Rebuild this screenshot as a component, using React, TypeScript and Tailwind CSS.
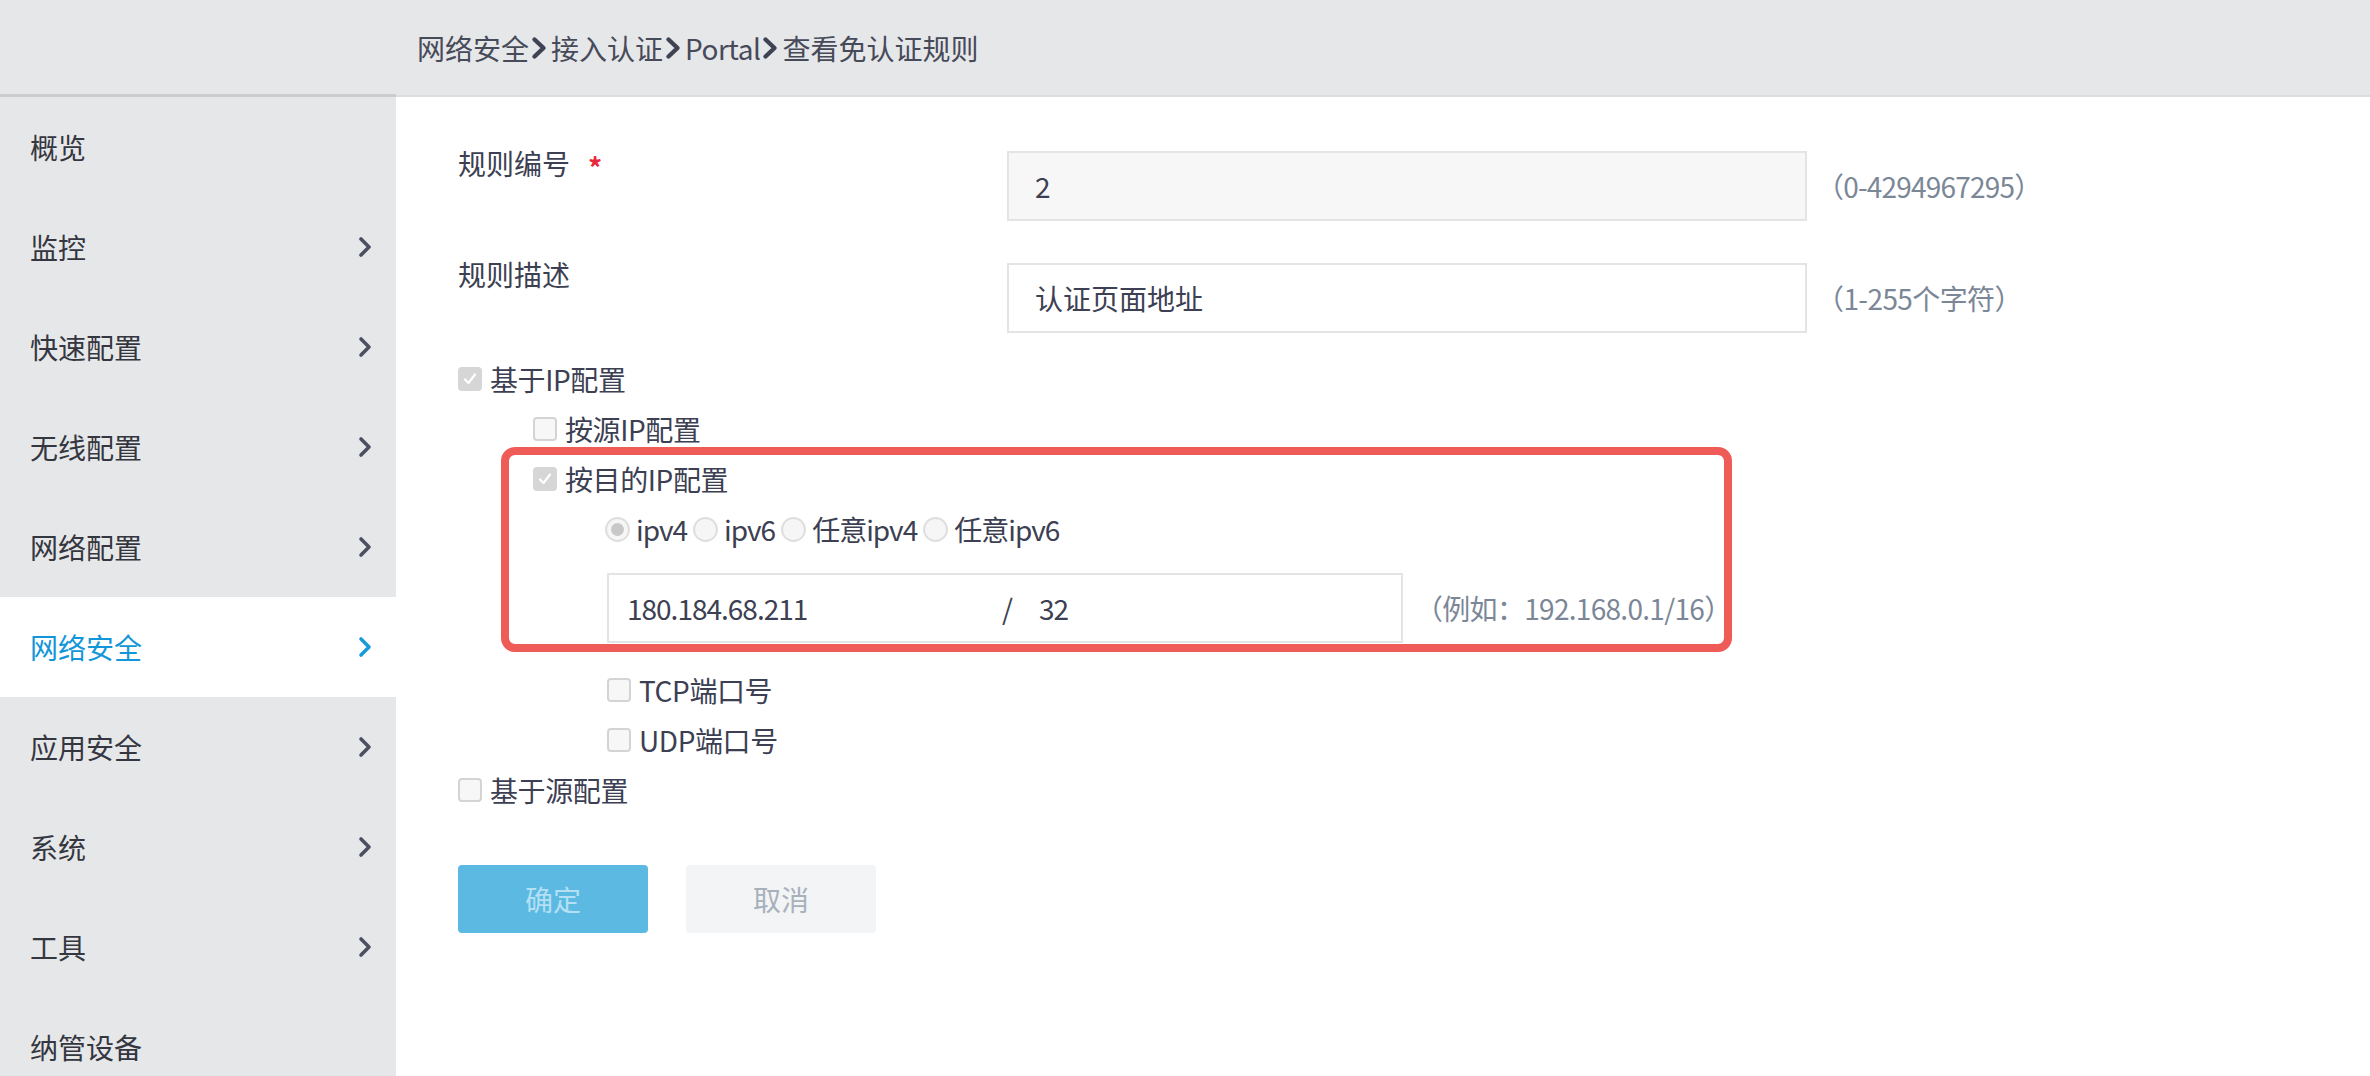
import React from 'react';

const menu = [
    { label: '概览', arrow: false },
    { label: '监控', arrow: true },
    { label: '快速配置', arrow: true },
    { label: '无线配置', arrow: true },
    { label: '网络配置', arrow: true },
    { label: '网络安全', arrow: true, active: true },
    { label: '应用安全', arrow: true },
    { label: '系统', arrow: true },
    { label: '工具', arrow: true },
    { label: '纳管设备', arrow: false },
];

const Chevron = ({ className }: { className?: string }) => (
    <svg width="14" height="22" viewBox="0 0 14 22" className={className}>
        <path d="M3 3 L11 11 L3 19" fill="none" stroke="currentColor" strokeWidth="3.6" strokeLinecap="round" strokeLinejoin="round" />
    </svg>
);

const Crumb = () => (
    <svg width="16" height="24" viewBox="0 0 16 24" className="ml-[2px] mr-[4px] text-[#3f4353]">
        <path d="M3.5 3.5 L12.5 12 L3.5 20.5" fill="none" stroke="currentColor" strokeWidth="4.4" strokeLinecap="round" strokeLinejoin="round" />
    </svg>
);

const Check = ({ checked }: { checked?: boolean }) =>
    checked ? (
        <div className="w-[24px] h-[24px] rounded-[4px] bg-[#d6d6d6] flex items-center justify-center shrink-0">
            <svg width="16" height="16" viewBox="0 0 16 16">
                <path d="M3 8.5 L6.5 12 L13 3.5" fill="none" stroke="#ffffff" strokeWidth="2.2" strokeLinecap="round" strokeLinejoin="round" />
            </svg>
        </div>
    ) : (
        <div className="w-[24px] h-[24px] rounded-[4px] border-2 border-[#d4d4d4] bg-[#f7f7f7] shrink-0" />
    );

const Radio = ({ checked }: { checked?: boolean }) => (
    <div className="w-[25px] h-[25px] rounded-full border-2 border-[#dedede] bg-[#f6f6f6] flex items-center justify-center shrink-0">
        {checked && <div className="w-[13px] h-[13px] rounded-full bg-[#c8c8c8]" />}
    </div>
);

const CheckRow = ({ label, checked, indent }: { label: string; checked?: boolean; indent: string }) => (
    <div className={`h-[50px] flex items-center gap-[8px] ${indent}`}>
        <Check checked={checked} />
        <span className="tracking-[-0.4px]">{label}</span>
    </div>
);

export default function App() {
    return (
        <div className="w-full h-[1076px] flex flex-col bg-white overflow-hidden font-['Noto_Sans_CJK_SC',sans-serif] text-[28px] text-[#3c4052]">
            {/* header */}
            <div className="h-[97px] flex bg-[#e6e7e9] shrink-0">
                <div className="w-[396px] border-b-[3px] border-[#cbcccf]" />
                <div className="flex-1 border-b-2 border-[#dcdde0] flex items-center pl-[21px] text-[#464a59] leading-none">
                    <span>网络安全</span>
                    <Crumb />
                    <span>接入认证</span>
                    <Crumb />
                    <span className="tracking-[-0.5px]">Portal</span>
                    <Crumb />
                    <span>查看免认证规则</span>
                </div>
            </div>

            <div className="flex flex-1 min-h-0">
                {/* sidebar */}
                <div className="w-[396px] bg-[#e6e7e9] shrink-0">
                    {menu.map((m) => (
                        <div
                            key={m.label}
                            className={`h-[100px] flex items-center justify-between pl-[30px] pr-[24px] ${
                                m.active ? 'bg-white text-[#1296d8]' : 'text-[#343640]'
                            }`}
                        >
                            <span>{m.label}</span>
                            {m.arrow && <Chevron className={m.active ? 'text-[#1a9ad8]' : 'text-[#4b4f61]'} />}
                        </div>
                    ))}
                </div>

                {/* form */}
                <div className="flex-1 pl-[62px] pt-[52px]">
                    <div className="flex items-start">
                        <div className="w-[549px] leading-[28px] flex">
                            <span>规则编号</span>
                            <span className="ml-[18px] mt-[4px] text-[#e8263c] font-bold">*</span>
                        </div>
                        <div className="mt-[2px] w-[800px] h-[70px] border-2 border-[#e3e4e6] bg-[#f7f7f7] flex items-center pl-[26px]">
                            2
                        </div>
                        <span className="mt-[2px] h-[70px] flex items-center ml-[9px] text-[#7b8797] tracking-[-0.8px]">（0-4294967295）</span>
                    </div>

                    <div className="flex items-start mt-[39px]">
                        <div className="w-[549px] leading-[28px]">规则描述</div>
                        <div className="mt-[3px] w-[800px] h-[70px] border-2 border-[#e3e4e6] bg-white flex items-center pl-[26px]">
                            认证页面地址
                        </div>
                        <span className="mt-[3px] h-[70px] flex items-center ml-[9px] text-[#7b8797] tracking-[-0.6px]">（1-255个字符）</span>
                    </div>

                    <div className="mt-[21px]">
                        <CheckRow label="基于IP配置" checked indent="" />
                        <CheckRow label="按源IP配置" indent="ml-[75px]" />

                        <div className="relative ml-[75px]">
                            <CheckRow label="按目的IP配置" checked indent="" />
                            <div className="h-[50px] flex items-center ml-[72px] gap-[6px] tracking-[-1px]">
                                <Radio checked />
                                <span>ipv4</span>
                                <Radio />
                                <span>ipv6</span>
                                <Radio />
                                <span>任意ipv4</span>
                                <Radio />
                                <span>任意ipv6</span>
                            </div>
                            <div className="flex items-center ml-[74px] mt-[19px]">
                                <div className="w-[796px] h-[70px] border-2 border-[#e3e4e6] bg-white flex items-center pl-[18px]">
                                    <span className="w-[375px] tracking-[-1px]">180.184.68.211</span>
                                    <span>/</span>
                                    <span className="ml-[26px] tracking-[-1px]">32</span>
                                </div>
                                <span className="ml-[12px] text-[#7b8797] tracking-[-0.7px]">（例如：192.168.0.1/16）</span>
                            </div>
                            <div className="absolute left-[-32px] top-[-7px] w-[1231px] h-[205px] border-[8px] border-[#ef5b56] rounded-[14px] pointer-events-none" />
                        </div>

                        <div className="mt-[22px]">
                            <CheckRow label="TCP端口号" indent="ml-[149px]" />
                            <CheckRow label="UDP端口号" indent="ml-[149px]" />
                            <CheckRow label="基于源配置" indent="" />
                        </div>
                    </div>

                    <div className="flex gap-[38px] mt-[50px]">
                        <button className="w-[190px] h-[68px] rounded-[4px] bg-[#5bb9e2] text-[#b3e0f4]">确定</button>
                        <button className="w-[190px] h-[68px] rounded-[4px] bg-[#f3f4f5] text-[#a7b1bc]">取消</button>
                    </div>
                </div>
            </div>
        </div>
    );
}
